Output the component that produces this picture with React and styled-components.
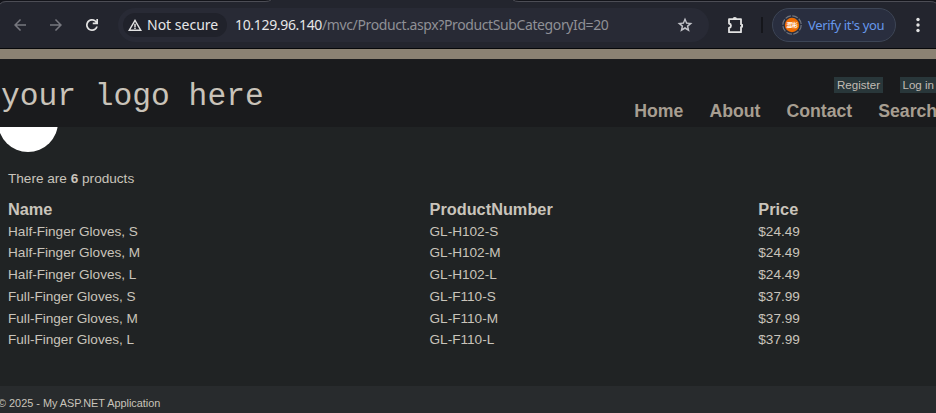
import React from "react";
import styled, { createGlobalStyle } from "styled-components";

const Global = createGlobalStyle`
  * { box-sizing: border-box; }
  html, body { margin: 0; padding: 0; overflow: hidden; background: #202324; }
  body { font-family: "Liberation Sans", Arial, sans-serif; font-size: 13.6px; color: #c9c4bb; }
`;

const Window = styled.div`
  width: 936px;
  height: 413px;
  display: flex;
  flex-direction: column;
  overflow: hidden;
`;

const Browser = styled.div`
  height: 49px;
  flex: none;
  background: #13141a;
  border-bottom: 1px solid #07080a;
  font-family: "Noto Sans", sans-serif;
  position: relative;
`;

const TabEdge = styled.svg`
  position: absolute;
  inset: 0 auto auto 0;
  display: block;
`;

const Toolbar = styled.div`
  position: relative;
  height: 48px;
  padding: 2px 0 0;
  display: flex;
  align-items: center;
`;

const Icon = styled.svg`
  display: block;
  flex: none;
  width: ${(p) => p.$size}px;
  height: ${(p) => p.$size}px;
  margin-left: ${(p) => p.$gap || 0}px;
  color: ${(p) => p.$color || "#e3e3e3"};
  fill: currentColor;
`;

const AddressBar = styled.div`
  width: 591px;
  height: 34px;
  margin-left: 17px;
  padding-left: 5px;
  border-radius: 17px;
  background: #282a35;
  display: flex;
  align-items: center;
  flex: none;
`;

const SecurityChip = styled.div`
  width: 104px;
  height: 24px;
  flex: none;
  border-radius: 12px;
  background: #20222b;
  display: flex;
  align-items: center;
  color: #e6e6e8;
  font-size: 14px;
  line-height: 20px;
  white-space: nowrap;
`;

const ChipLabel = styled.span`
  margin-left: 4px;
`;

const Url = styled.div`
  width: 436px;
  margin-left: 8px;
  flex: none;
  font-size: 14px;
  line-height: 20px;
  letter-spacing: -0.39px;
  color: #8f9096;
  white-space: nowrap;
`;

const Host = styled.span`
  color: #e6e6e8;
  letter-spacing: -0.33px;
`;

const Divider = styled.div`
  width: 2px;
  height: 16px;
  margin-left: 16px;
  background: #15161b;
`;

const Profile = styled.div`
  width: 124px;
  height: 34px;
  margin-left: 9px;
  padding-left: 9px;
  flex: none;
  border: 1px solid #3d4555;
  border-radius: 17px;
  background: #292e3f;
  display: flex;
  align-items: center;
  color: #6698ec;
  font-size: 13px;
  line-height: 20px;
  letter-spacing: -0.32px;
  white-space: nowrap;
`;

const Avatar = styled.svg`
  display: block;
  flex: none;
  width: 20px;
  height: 20px;
`;

const VerifyText = styled.span`
  margin-left: 6px;
`;

const Header = styled.header`
  height: 78px;
  flex: none;
  border-top: 10px solid #8b8273;
  background: #1a1b1d;
  display: flex;
  justify-content: space-between;
`;

const SiteTitle = styled.div`
  margin: 20px 0 0 1px;
  font-family: "Liberation Mono", monospace;
  font-size: 31.28px;
  line-height: 36px;
  white-space: pre;
  color: #c9c3b9;
`;

const HeaderLinks = styled.div`
  width: 302px;
  flex: none;
  padding-top: 18px;
  overflow: hidden;
`;

const Account = styled.div`
  display: flex;
  gap: 17px;
  margin-left: 200px;
`;

const AccountLink = styled.a`
  height: 16px;
  flex: none;
  padding: 0 ${(p) => p.$pad}px;
  background: #29373a;
  color: #c1bcb4;
  font-size: 11.56px;
  line-height: 16px;
  white-space: nowrap;
`;

const Nav = styled.nav`
  display: flex;
  gap: 26px;
  margin-top: 8px;
  padding-left: 0.3px;
  color: #a79e91;
  font-size: 17.68px;
  line-height: 20px;
  font-weight: 700;
`;

const Main = styled.main`
  height: 259px;
  flex: none;
  padding: 0 8px;
  background: #202324;
`;

const CircleClip = styled.div`
  height: 25px;
  margin-left: -10px;
  overflow: hidden;
  display: flex;
  align-items: flex-end;
`;

const Circle = styled.div`
  width: 60px;
  height: 60px;
  flex: none;
  border-radius: 50%;
  background: #fff;
`;

const Summary = styled.p`
  margin: 18px 0 0;
  line-height: 17px;
`;

const Grid = styled.div`
  display: grid;
  grid-template-columns: 421.5px 328.8px 1fr;
  grid-template-rows: 22.75px repeat(6, 21.7px);
  margin-top: 11px;
  line-height: 21px;
`;

const Heading = styled.div`
  font-size: 16.32px;
  line-height: 23px;
  font-weight: 700;
`;

const Cell = styled.div`
  white-space: nowrap;
`;

const Footer = styled.footer`
  flex: 1;
  padding-top: 10px;
  background: #282b2d;
  font-size: 10.88px;
  line-height: 14px;
`;

const Copyright = styled.div`
  margin-left: -2px;
`;

const navItems = ["Home", "About", "Contact", "Search"];

const products = [
  ["Half-Finger Gloves, S", "GL-H102-S", "$24.49"],
  ["Half-Finger Gloves, M", "GL-H102-M", "$24.49"],
  ["Half-Finger Gloves, L", "GL-H102-L", "$24.49"],
  ["Full-Finger Gloves, S", "GL-F110-S", "$37.99"],
  ["Full-Finger Gloves, M", "GL-F110-M", "$37.99"],
  ["Full-Finger Gloves, L", "GL-F110-L", "$37.99"],
];

function BrowserChrome() {
  return (
    <Browser>
      <TabEdge width="936" height="48" viewBox="0 0 936 48">
        <path d="M0 48V4Q2 1 6 1H266Q270 1 272 0H512Q514 1 518 1H930Q934 1 936 3V48Z" fill="#23252e" />
        <path d="M0 4Q2 1.5 6 1.5H265Q269 1.5 271 0M513 0Q515 1.5 519 1.5H930Q934 1.5 936 3" fill="none" stroke="#4c4d55" />
      </TabEdge>
      <Toolbar>
        <Icon $size={18} $gap={11} $color="#77787f" viewBox="0 0 24 24">
          <path d="M20 11H7.8l5.6-5.6L12 4l-8 8 8 8 1.4-1.4L7.8 13H20z" />
        </Icon>
        <Icon $size={18} $gap={18} $color="#77787f" viewBox="0 0 24 24">
          <path d="M4 11h12.2l-5.6-5.6L12 4l8 8-8 8-1.4-1.4 5.6-5.6H4z" />
        </Icon>
        <Icon $size={18} $gap={18} viewBox="0 0 24 24">
          <path d="M12 20a8 8 0 1 1 5.8-13.5V4H20v7h-7V8.8h3.9A5.8 5.8 0 1 0 17.5 14h2.2A8 8 0 0 1 12 20z" />
        </Icon>
        <AddressBar>
          <SecurityChip>
            <Icon $size={16} $gap={4} viewBox="0 0 16 16">
              <path fillRule="evenodd" d="M8 2 1 14h14zM8 4.8 12.5 12.4h-9z" />
              <path d="M7.25 6.8h1.5v3.2h-1.5zM7.25 10.6h1.5v1.3h-1.5z" />
            </Icon>
            <ChipLabel>Not secure</ChipLabel>
          </SecurityChip>
          <Url>
            <Host>10.129.96.140</Host>/mvc/Product.aspx?ProductSubCategoryId=20
          </Url>
          <Icon $size={18} $gap={5} $color="#c1c2c8" viewBox="0 0 24 24">
            <path fillRule="evenodd" d="m12 2 2.8 6.7 7.2.6-5.5 4.7 1.7 7-6.2-3.7L5.8 21l1.7-7L2 9.3l7.2-.6zM12 6.8l-1.5 3.5-3.7.3 2.8 2.5-.8 3.6 3.2-1.9 3.2 1.9-.8-3.6 2.8-2.5-3.7-.3z" />
          </Icon>
        </AddressBar>
        <Icon $size={18} $gap={18} viewBox="0 0 18 18">
          <path
            d="M2 3.2h12v5q1.2.1 1.2 1.5t-1.2 1.5v5H2v-4.3q2-.4 2-2.2T2 7.5z"
            fill="none"
            stroke="currentColor"
            strokeWidth="1.8"
            strokeLinejoin="round"
          />
          <path d="M5.6 3.2a2.2 2.2 0 0 1 4.4 0zM14.2 7.6a2.2 2.2 0 0 1 0 4.3z" />
        </Icon>
        <Divider />
        <Profile>
          <Avatar viewBox="0 0 20 20">
            <circle cx="10" cy="10" r="9.2" fill="none" stroke="#71757e" strokeWidth="1.2" strokeDasharray="5.8 1.426" />
            <circle cx="10" cy="10" r="7.2" fill="#ef6c00" />
            <text x="10" y="12.3" textAnchor="middle" fill="#fff" fontSize="5.8" fontWeight="700" fontFamily="'Noto Sans CJK SC', sans-serif">澀彬</text>
          </Avatar>
          <VerifyText>Verify it's you</VerifyText>
        </Profile>
        <Icon $size={18} $gap={13} viewBox="0 0 18 18">
          <circle cx="9" cy="3.5" r="1.7" />
          <circle cx="9" cy="9" r="1.7" />
          <circle cx="9" cy="14.5" r="1.7" />
        </Icon>
      </Toolbar>
    </Browser>
  );
}

export default function App() {
  return (
    <Window>
      <Global />
      <BrowserChrome />
      <Header>
        <SiteTitle>your logo here</SiteTitle>
        <HeaderLinks>
          <Account>
            <AccountLink $pad={3}>Register</AccountLink>
            <AccountLink $pad={2.5}>Log in</AccountLink>
          </Account>
          <Nav>
            {navItems.map((item) => (
              <span key={item}>{item}</span>
            ))}
          </Nav>
        </HeaderLinks>
      </Header>
      <Main>
        <CircleClip>
          <Circle />
        </CircleClip>
        <Summary>
          There are <b>6</b> products
        </Summary>
        <Grid>
          <Heading>Name</Heading>
          <Heading>ProductNumber</Heading>
          <Heading>Price</Heading>
          {products.flatMap((row) => row.map((value, i) => <Cell key={row[1] + i}>{value}</Cell>))}
        </Grid>
      </Main>
      <Footer>
        <Copyright>© 2025 - My ASP.NET Application</Copyright>
      </Footer>
    </Window>
  );
}
